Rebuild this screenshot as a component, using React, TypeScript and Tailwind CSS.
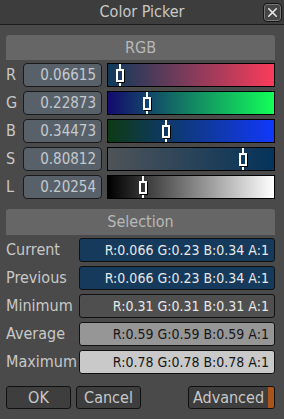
import { X } from "lucide-react";

const font = "font-['DejaVu_Sans_Condensed','DejaVu_Sans',sans-serif]";

const channels = [
    { label: "R", value: 0.06615, grad: "bg-[linear-gradient(to_right,#0e3a5b,#fa3c5a)]" },
    { label: "G", value: 0.22873, grad: "bg-[linear-gradient(to_right,#130a6e,#12ff58)]" },
    { label: "B", value: 0.34473, grad: "bg-[linear-gradient(to_right,#0d3a14,#1138fa)]" },
    { label: "S", value: 0.80812, grad: "bg-[linear-gradient(to_right,#4f5458,#04335a)]" },
    { label: "L", value: 0.20254, grad: "bg-[linear-gradient(to_right,#000000,#ffffff)]" },
];

const selection = [
    { label: "Current", text: "R:0.066 G:0.23 B:0.34 A:1", box: "bg-[#153a5b] text-[#e8e8e8]" },
    { label: "Previous", text: "R:0.066 G:0.23 B:0.34 A:1", box: "bg-[#153a5b] text-[#e8e8e8]" },
    { label: "Minimum", text: "R:0.31 G:0.31 B:0.31 A:1", box: "bg-[#4f4f4f] text-[#e8e8e8]" },
    { label: "Average", text: "R:0.59 G:0.59 B:0.59 A:1", box: "bg-[#969696] text-[#161616]" },
    { label: "Maximum", text: "R:0.78 G:0.78 B:0.78 A:1", box: "bg-[#c9c9c9] text-[#161616]" },
];

function Slider({ value, grad }: { value: number; grad: string }) {
    const x = Math.round(value * 166);
    return (
        <div className={`relative h-[24px] w-[168px] border border-black ${grad}`}>
            {/* stem above and below the knob */}
            <div className="absolute top-0 h-[5px] w-[2px] bg-white" style={{ left: x }} />
            <div className="absolute bottom-0 h-[5px] w-[2px] bg-white" style={{ left: x }} />
            <div
                className="absolute top-[5px] h-[13px] w-[8px] border-2 border-white shadow-[1px_1px_0_#000]"
                style={{ left: x - 3 }}
            />
        </div>
    );
}

export default function App() {
    return (
        <div className={`w-[284px] h-[419px] bg-[#4a4a4a] ${font} overflow-hidden`}>
            {/* title */}
            <div className="relative h-[25px] bg-[#3d3d3d] border-b border-[#1c1c1c] flex items-center justify-center">
                <span className="text-[16px] text-[#c8c8c8] leading-none">Color Picker</span>
                <div className="absolute right-[2px] top-[3px] w-[19px] h-[19px] rounded-[4px] border border-[#151515] bg-[#454545] shadow-[inset_0_0_0_1px_#777] flex items-center justify-center">
                    <X size={15} strokeWidth={2.5} color="#e8e8e8" />
                </div>
            </div>

            <div className="ml-[6px] w-[269px] pt-[10px]">
                {/* RGB */}
                <div className="h-[25px] rounded-t-[3px] bg-[#666666] flex items-center justify-center text-[16px] text-[#b8b8b8]">
                    RGB
                </div>
                <div className="mt-[3px] flex flex-col gap-[4px]">
                    {channels.map((c) => (
                        <div key={c.label} className="flex items-center h-[24px]">
                            <span className="w-[17px] text-[16px] text-[#c8c8c8]">{c.label}</span>
                            <div className="w-[79px] h-[24px] rounded-[4px] border border-[#1a1a1a] bg-[#58616a] text-[#c4c9ce] text-[15px] flex items-center justify-end pr-[5px]">
                                {c.value.toFixed(5)}
                            </div>
                            <div className="ml-[5px]">
                                <Slider value={c.value} grad={c.grad} />
                            </div>
                        </div>
                    ))}
                </div>

                {/* Selection */}
                <div className="mt-[10px] h-[26px] rounded-t-[3px] bg-[#666666] flex items-center justify-center text-[16px] text-[#b8b8b8]">
                    Selection
                </div>
                <div className="mt-[3px] flex flex-col gap-[4px]">
                    {selection.map((s) => (
                        <div key={s.label} className="flex items-center h-[24px]">
                            <span className="w-[73px] text-[16px] text-[#c8c8c8]">{s.label}</span>
                            <div className={`flex-1 h-[24px] rounded-[3px] border border-[#111] text-[14px] flex items-center justify-end pr-[5px] ${s.box}`}>
                                {s.text}
                            </div>
                        </div>
                    ))}
                </div>

                {/* buttons */}
                <div className="mt-[12px] flex items-center">
                    <button className="w-[65px] h-[23px] rounded-[3px] border border-[#111] bg-[#3e3e3e] text-[16px] text-[#c8c8c8] flex items-center justify-center">
                        OK
                    </button>
                    <button className="ml-[5px] w-[65px] h-[23px] rounded-[3px] border border-[#111] bg-[#3e3e3e] text-[16px] text-[#c8c8c8] flex items-center justify-center">
                        Cancel
                    </button>
                    <button className="ml-auto w-[87px] h-[23px] rounded-[3px] border border-[#111] bg-[#3e3e3e] text-[16px] text-[#c8c8c8] flex items-center overflow-hidden">
                        <span className="flex-1 text-center">Advanced</span>
                        <span className="w-[6px] h-full bg-[#a9541c]" />
                    </button>
                </div>
            </div>
        </div>
    );
}
